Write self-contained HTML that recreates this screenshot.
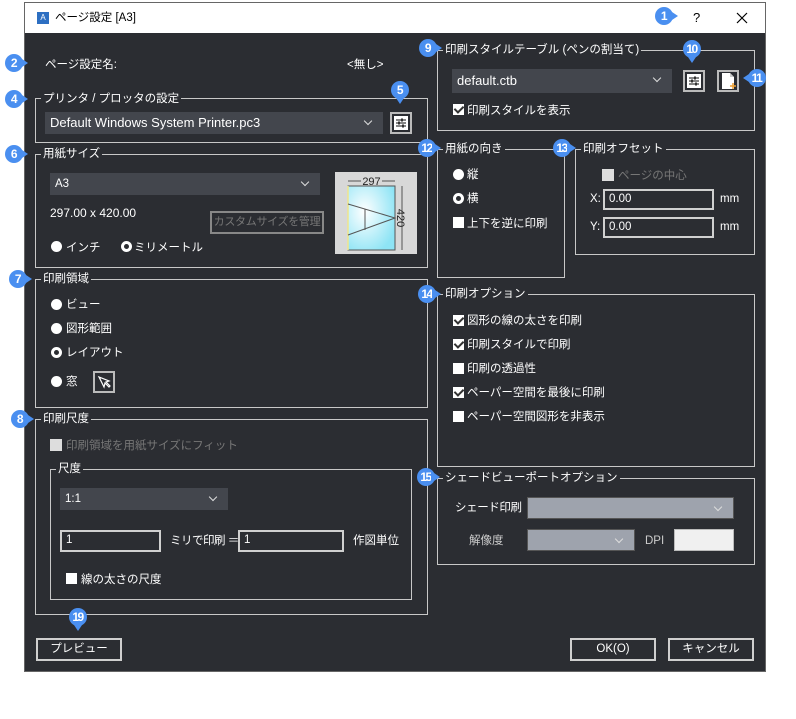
<!DOCTYPE html>
<html><head><meta charset="utf-8"><style>
*{box-sizing:border-box;margin:0;padding:0}
body{width:796px;height:719px;background:#fff;position:relative;overflow:hidden;font-family:"Liberation Sans","Noto Sans CJK JP",sans-serif;font-size:11.5px;color:#fff}
.a{position:absolute}
#dlg{left:24px;top:2px;width:742px;height:670px;background:#2b2d32;border:1px solid #666}
#tb{left:25px;top:3px;width:740px;height:30px;background:#fff;color:#000}
.gb{position:absolute;border:1px solid #c8c8c8}
.lg{position:absolute;background:#2b2d32;padding:0 2px;line-height:14px;white-space:nowrap}
.t{position:absolute;white-space:nowrap;line-height:14px}
.cb{position:absolute;background:#43464d;line-height:22px;padding-left:5px;white-space:nowrap}
.cb::after{content:"";position:absolute;right:12px;top:6px;width:5px;height:5px;border-right:1px solid #ddd;border-bottom:1px solid #ddd;transform:rotate(45deg)}
.in{position:absolute;border:2px solid #d0d0d0;background:#2b2d32;line-height:16px;padding-left:4px}
.btn{position:absolute;border:2px solid #cfcfcf;text-align:center;line-height:18px;white-space:nowrap}
.rd{position:absolute;width:11px;height:11px;border-radius:50%;background:#fff}
.rd.o{background:#2b2d32;border:3px solid #fff}
.ck{position:absolute;width:11px;height:11px;background:#fff}
.ck.c::after{content:"";position:absolute;left:3px;top:0px;width:4px;height:7px;border-right:2px solid #333;border-bottom:2px solid #333;transform:rotate(45deg)}
.ib{position:absolute;width:22px;height:22px;border:2px solid #bbb;background:#2b2d32}
.mk{position:absolute;width:18px;height:18px;border-radius:50%;background:#4a8ff0;color:#fff;font-weight:bold;font-size:12px;line-height:18px;text-align:center;letter-spacing:-1.5px;text-indent:-1px}
.mk.r::after{content:"";position:absolute;left:14px;top:3px;border-left:9px solid #4a8ff0;border-top:6px solid transparent;border-bottom:6px solid transparent}
.mk.d::after{content:"";position:absolute;left:3px;top:14px;border-top:9px solid #4a8ff0;border-left:6px solid transparent;border-right:6px solid transparent}
.mk.l::after{content:"";position:absolute;right:14px;top:3px;border-right:9px solid #4a8ff0;border-top:6px solid transparent;border-bottom:6px solid transparent}
.dis{color:#777}
</style></head><body>
<div id="dlg" class="a"></div>
<div id="tb" class="a">
 <div class="a" style="left:12px;top:9px;width:12px;height:12px;background:#2d6fc2;color:#fff;font-size:8px;line-height:12px;text-align:center">A</div>
 <div class="t" style="left:30px;top:8px;color:#000">ページ設定 [A3]</div>
 <div class="t" style="left:668px;top:8px;color:#000;font-size:13px">?</div>
 <svg class="a" style="left:711px;top:9px" width="12" height="12"><path d="M1 1L11 11M11 1L1 11" stroke="#000" stroke-width="1.2"/></svg>
</div>

<div class="t" style="left:45px;top:58px">ページ設定名:</div>
<div class="t" style="left:347px;top:58px">&lt;無し&gt;</div>

<div class="gb" style="left:35px;top:98px;width:393px;height:45px"></div>
<div class="lg" style="left:41px;top:92px">プリンタ / プロッタの設定</div>
<div class="cb" style="left:45px;top:112px;width:338px;height:22px;font-size:13px">Default Windows System Printer.pc3</div>
<div class="ib" style="left:390px;top:112px"><svg width="18" height="18" viewBox="0 0 18 18" style="position:absolute;left:0;top:0"><rect x="2" y="2" width="14" height="14" fill="#fff"/><g stroke="#333" stroke-width="1.2"><line x1="4" y1="6" x2="14" y2="6"/><line x1="4" y1="9" x2="14" y2="9"/><line x1="4" y1="12" x2="14" y2="12"/></g><g fill="#333"><rect x="9" y="4.5" width="2" height="3"/><rect x="6" y="7.5" width="2" height="3"/><rect x="10" y="10.5" width="2" height="3"/></g></svg></div>

<div class="gb" style="left:35px;top:154px;width:393px;height:114px"></div>
<div class="lg" style="left:41px;top:147px">用紙サイズ</div>
<div class="cb" style="left:50px;top:173px;width:270px;height:22px">A3</div>
<div class="t" style="left:50px;top:206px;font-size:12px">297.00 x 420.00</div>
<div class="btn dis" style="left:210px;top:211px;width:114px;height:23px;border-color:#888;font-size:11px;letter-spacing:-0.3px">カスタムサイズを管理</div>
<div class="rd" style="left:51px;top:241px"></div><div class="t" style="left:66px;top:241px">インチ</div>
<div class="rd o" style="left:121px;top:241px"></div><div class="t" style="left:134px;top:241px">ミリメートル</div>
<div class="a" style="left:335px;top:172px;width:82px;height:82px;background:#d8d8d8"></div>
<svg class="a" style="left:335px;top:172px" width="82" height="82" viewBox="0 0 82 82">
<defs><radialGradient id="g" cx="0.35" cy="0.4" r="0.7"><stop offset="0" stop-color="#fff"/><stop offset="1" stop-color="#8ee4f5"/></radialGradient></defs>
<rect x="13" y="14" width="47" height="64" fill="url(#g)" stroke="#555"/>
<line x1="13" y1="14" x2="13" y2="78" stroke="#f0e68c" stroke-width="1.5"/>
<g stroke="#555" fill="none"><path d="M13 32 L60 46 L13 63"/><line x1="30" y1="37" x2="30" y2="58"/><line x1="67" y1="14" x2="67" y2="78"/><line x1="13" y1="9" x2="26" y2="9"/><line x1="47" y1="9" x2="60" y2="9"/></g>
<text x="36.5" y="13" font-size="11" fill="#222" text-anchor="middle" font-family="Liberation Sans">297</text>
<text x="0" y="0" font-size="11" fill="#222" text-anchor="middle" font-family="Liberation Sans" transform="translate(62,46) rotate(90)">420</text>
</svg>

<div class="gb" style="left:35px;top:279px;width:393px;height:129px"></div>
<div class="lg" style="left:41px;top:272px">印刷領域</div>
<div class="rd" style="left:51px;top:299px"></div><div class="t" style="left:66px;top:298px">ビュー</div>
<div class="rd" style="left:51px;top:323px"></div><div class="t" style="left:66px;top:322px">図形範囲</div>
<div class="rd o" style="left:51px;top:347px"></div><div class="t" style="left:66px;top:346px">レイアウト</div>
<div class="rd" style="left:51px;top:376px"></div><div class="t" style="left:66px;top:375px">窓</div>
<div class="ib" style="left:93px;top:371px"><svg width="18" height="18" viewBox="0 0 18 18" style="position:absolute;left:0;top:0"><path d="M4 4 L9 14 L10 10 L14 14 L15 13 L11 9 L14 8 Z" fill="none" stroke="#fff" stroke-width="1.2"/></svg></div>

<div class="gb" style="left:35px;top:419px;width:393px;height:196px"></div>
<div class="lg" style="left:41px;top:412px">印刷尺度</div>
<div class="ck" style="left:50px;top:439px;width:12px;height:12px;background:#ddd"></div><div class="t dis" style="left:66px;top:439px">印刷領域を用紙サイズにフィット</div>
<div class="gb" style="left:50px;top:469px;width:362px;height:131px"></div>
<div class="lg" style="left:56px;top:462px">尺度</div>
<div class="cb" style="left:60px;top:488px;width:168px;height:22px">1:1</div>
<div class="in" style="left:60px;top:530px;width:101px;height:22px">1</div>
<div class="t" style="left:170px;top:534px;letter-spacing:-0.5px">ミリで印刷 ＝</div>
<div class="in" style="left:238px;top:530px;width:106px;height:22px">1</div>
<div class="t" style="left:353px;top:534px">作図単位</div>
<div class="ck" style="left:66px;top:573px"></div><div class="t" style="left:81px;top:573px">線の太さの尺度</div>

<div class="btn" style="left:36px;top:638px;width:86px;height:23px">プレビュー</div>

<div class="gb" style="left:437px;top:50px;width:318px;height:81px"></div>
<div class="lg" style="left:443px;top:43px">印刷スタイルテーブル (ペンの割当て)</div>
<div class="cb" style="left:452px;top:69px;width:220px;height:24px;line-height:24px;font-size:13px">default.ctb</div>
<div class="ib" style="left:683px;top:70px"><svg width="18" height="18" viewBox="0 0 18 18" style="position:absolute;left:0;top:0"><rect x="2" y="2" width="14" height="14" fill="#fff"/><g stroke="#333" stroke-width="1.2"><line x1="4" y1="6" x2="14" y2="6"/><line x1="4" y1="9" x2="14" y2="9"/><line x1="4" y1="12" x2="14" y2="12"/></g><g fill="#333"><rect x="9" y="4.5" width="2" height="3"/><rect x="6" y="7.5" width="2" height="3"/><rect x="10" y="10.5" width="2" height="3"/></g></svg></div>
<div class="ib" style="left:717px;top:70px"><svg width="18" height="18" viewBox="0 0 18 18" style="position:absolute;left:0;top:0"><path d="M3 1 H11 L15 5 V17 H3 Z" fill="#fff"/><path d="M11 1 V5 H15" fill="#ccc"/><path d="M14 11 V17 M11 14 H17" stroke="#f0a030" stroke-width="1.5"/></svg></div>
<div class="ck c" style="left:453px;top:104px"></div><div class="t" style="left:467px;top:104px">印刷スタイルを表示</div>

<div class="gb" style="left:437px;top:149px;width:128px;height:129px"></div>
<div class="lg" style="left:443px;top:142px">用紙の向き</div>
<div class="rd" style="left:453px;top:169px"></div><div class="t" style="left:467px;top:168px">縦</div>
<div class="rd o" style="left:453px;top:193px"></div><div class="t" style="left:467px;top:192px">横</div>
<div class="ck" style="left:453px;top:217px"></div><div class="t" style="left:467px;top:217px">上下を逆に印刷</div>

<div class="gb" style="left:575px;top:149px;width:180px;height:106px"></div>
<div class="lg" style="left:581px;top:142px">印刷オフセット</div>
<div class="ck" style="left:602px;top:169px;width:12px;height:12px;background:#ddd"></div><div class="t dis" style="left:618px;top:169px">ページの中心</div>
<div class="t" style="left:590px;top:192px">X:</div><div class="in" style="left:603px;top:189px;width:111px;height:21px">0.00</div><div class="t" style="left:720px;top:192px">mm</div>
<div class="t" style="left:590px;top:220px">Y:</div><div class="in" style="left:603px;top:217px;width:111px;height:21px">0.00</div><div class="t" style="left:720px;top:220px">mm</div>

<div class="gb" style="left:437px;top:294px;width:318px;height:173px"></div>
<div class="lg" style="left:443px;top:287px">印刷オプション</div>
<div class="ck c" style="left:453px;top:315px"></div><div class="t" style="left:467px;top:314px">図形の線の太さを印刷</div>
<div class="ck c" style="left:453px;top:339px"></div><div class="t" style="left:467px;top:338px">印刷スタイルで印刷</div>
<div class="ck" style="left:453px;top:363px"></div><div class="t" style="left:467px;top:362px">印刷の透過性</div>
<div class="ck c" style="left:453px;top:387px"></div><div class="t" style="left:467px;top:386px">ペーパー空間を最後に印刷</div>
<div class="ck" style="left:453px;top:411px"></div><div class="t" style="left:467px;top:410px">ペーパー空間図形を非表示</div>

<div class="gb" style="left:437px;top:478px;width:318px;height:87px"></div>
<div class="lg" style="left:443px;top:471px">シェードビューポートオプション</div>
<div class="t" style="left:455px;top:501px;letter-spacing:-0.4px">シェード印刷</div>
<div class="cb" style="left:527px;top:497px;width:207px;height:22px;background:#9ea3ad;border:1px solid #555"></div>
<div class="t" style="left:469px;top:534px;color:#ccc">解像度</div>
<div class="cb" style="left:527px;top:529px;width:108px;height:22px;background:#9ea3ad;border:1px solid #555"></div>
<div class="t" style="left:645px;top:534px;color:#ccc">DPI</div>
<div class="a" style="left:674px;top:529px;width:60px;height:22px;background:#f0f0f0;border:1px solid #bbb"></div>

<div class="btn" style="left:570px;top:638px;width:86px;height:23px">OK(O)</div>
<div class="btn" style="left:668px;top:638px;width:86px;height:23px">キャンセル</div>

<div class="mk r" style="left:655px;top:7px">1</div>
<div class="mk r" style="left:5px;top:54px">2</div>
<div class="mk r" style="left:5px;top:90px">4</div>
<div class="mk d" style="left:391px;top:81px">5</div>
<div class="mk r" style="left:5px;top:145px">6</div>
<div class="mk r" style="left:9px;top:270px">7</div>
<div class="mk r" style="left:11px;top:410px">8</div>
<div class="mk r" style="left:419px;top:39px">9</div>
<div class="mk d" style="left:683px;top:40px">10</div>
<div class="mk l" style="left:748px;top:69px">11</div>
<div class="mk r" style="left:418px;top:139px">12</div>
<div class="mk r" style="left:553px;top:139px">13</div>
<div class="mk r" style="left:418px;top:285px">14</div>
<div class="mk r" style="left:417px;top:468px">15</div>
<div class="mk d" style="left:69px;top:608px">19</div>
</body></html>
